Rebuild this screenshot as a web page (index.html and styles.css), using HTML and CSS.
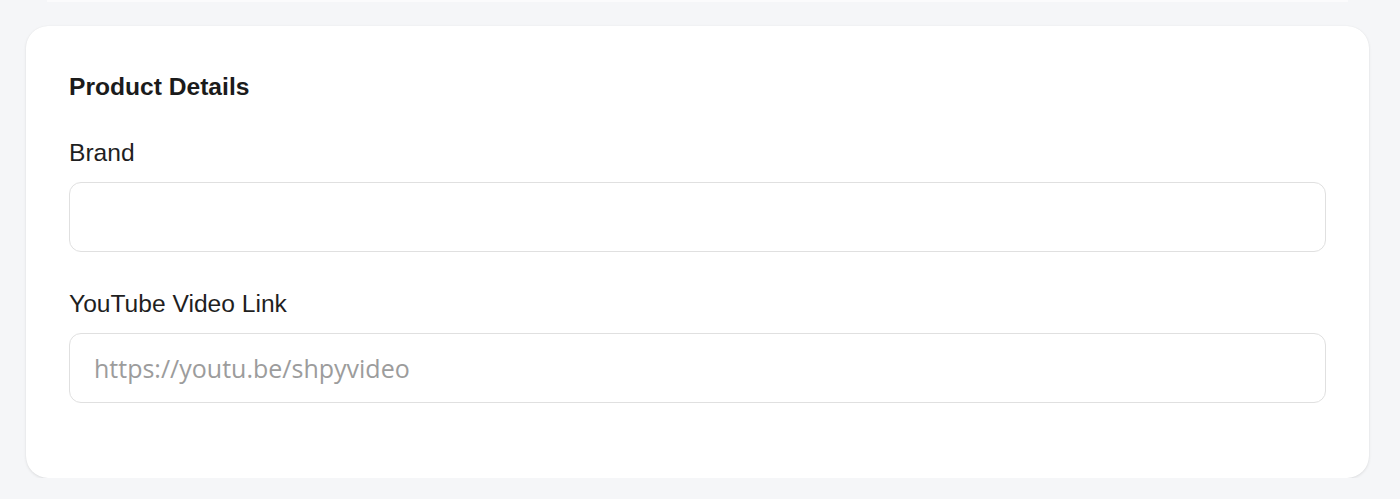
FILE: index.html
```html
<!DOCTYPE html>
<html lang="en">
<head>
<meta charset="utf-8">
<title>Product Details</title>
<link rel="stylesheet" href="styles.css">
</head>
<body>
<div class="page">
  <div class="prev-edge"></div>
  <section class="card">
    <h2 class="card-title">Product Details</h2>
    <div class="field">
      <label class="field-label" for="brand">Brand</label>
      <input class="field-input" id="brand" type="text">
    </div>
    <div class="field">
      <label class="field-label" for="yt">YouTube Video Link</label>
      <input class="field-input" id="yt" type="text" placeholder="https://youtu.be/shpyvideo">
    </div>
  </section>
</div>
</body>
</html>
```

FILE: styles.css
```css
html, body {
  margin: 0;
  padding: 0;
  background: #f5f6f8;
}

.page {
  padding: 0 31px 0 26px;
  font-family: "Liberation Sans", Arial, sans-serif;
}

.prev-edge {
  height: 2px;
  margin: 0 21px 0 21px;
  background: #fbfbfc;
}

.card {
  margin-top: 24px;
  background: #ffffff;
  border-radius: 22px;
  box-shadow: 0 1px 3px rgba(0, 0, 0, 0.1), 0 0 1px rgba(0, 0, 0, 0.06);
  padding: 47px 43px 37px 43px;
  box-sizing: border-box;
  height: 452px;
}

.card-title {
  margin: 0;
  font-size: 24.6px;
  line-height: 28px;
  font-weight: 700;
  color: #1b1b1b;
}

.field {
  display: flex;
  flex-direction: column;
  gap: 15px;
  margin-top: 38px;
}

.field-label {
  font-size: 24.6px;
  line-height: 28px;
  color: #1f1f1f;
}

.field-input {
  height: 70px;
  box-sizing: border-box;
  border: 1px solid #e0e0e0;
  border-radius: 12px;
  padding: 0 24px;
  font-family: "Open Sans", "Noto Sans", sans-serif;
  font-size: 25px;
  color: #222;
  background: #fff;
  outline: none;
  width: 100%;
}

.field-input::placeholder {
  color: #9c9c9c;
}
```
